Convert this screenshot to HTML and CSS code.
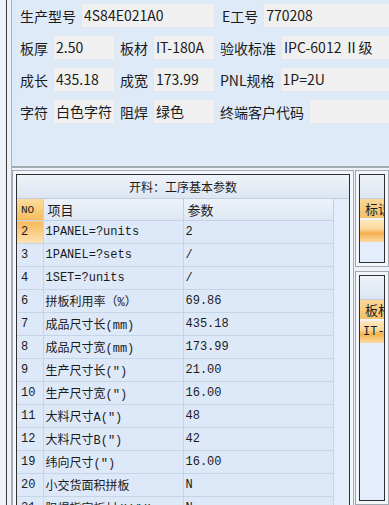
FILE: index.html
```html
<!DOCTYPE html>
<html lang="zh-CN">
<head>
  <meta charset="UTF-8" />
  <title>开料参数</title>
  <link rel="stylesheet" href="styles.css">
</head>
<body>
<div class="app">
  <div class="side"></div>
  <div class="main">

    <!-- 基本信息 -->
    <div class="top-panel">
      <div class="row">
        <span class="lbl">生产型号</span><span class="field w134">4S84E021A0</span>
        <span class="lbl gap2">E工号</span><span class="field grow">770208</span>
      </div>
      <div class="row">
        <span class="lbl">板厚</span><span class="field w62">2.50</span>
        <span class="lbl">板材</span><span class="field w62">IT-180A</span>
        <span class="lbl">验收标准</span><span class="field grow">IPC-6012 Ⅱ级</span>
      </div>
      <div class="row">
        <span class="lbl">成长</span><span class="field w62">435.18</span>
        <span class="lbl">成宽</span><span class="field w62">173.99</span>
        <span class="lbl">PNL规格</span><span class="field grow">1P=2U</span>
      </div>
      <div class="row">
        <span class="lbl">字符</span><span class="field w62">白色字符</span>
        <span class="lbl">阻焊</span><span class="field w62">绿色</span>
        <span class="lbl">终端客户代码</span><span class="field grow"></span>
      </div>
    </div>

    <div class="lower">
      <!-- 开料工序参数 -->
      <div class="group left-group">
        <div class="group-inner">
          <div class="group-title">开料：工序基本参数</div>
          <table class="grid">
            <colgroup><col class="c-no"><col class="c-item"><col class="c-val"></colgroup>
            <thead>
              <tr><th class="no">NO</th><th>项目</th><th>参数</th></tr>
            </thead>
            <tbody id="paramRows"></tbody>
          </table>
        </div>
      </div>

      <div class="right-col">
        <div class="group r1">
          <div class="group-inner">
            <div class="group-title"></div>
            <div class="r-head">标识</div>
            <div class="r-row"></div>
          </div>
        </div>
        <div class="group r2">
          <div class="group-inner">
            <div class="group-title"></div>
            <div class="r-head">板材</div>
            <div class="r-row mono">IT-180A</div>
          </div>
        </div>
      </div>
    </div>

  </div>
</div>

<script>
  const params = [
    ['2', '1PANEL=?units', '2'],
    ['3', '1PANEL=?sets', '/'],
    ['4', '1SET=?units', '/'],
    ['6', '拼板利用率（%）', '69.86'],
    ['7', '成品尺寸长(mm)', '435.18'],
    ['8', '成品尺寸宽(mm)', '173.99'],
    ['9', '生产尺寸长(")', '21.00'],
    ['10', '生产尺寸宽(")', '16.00'],
    ['11', '大料尺寸A(")', '48'],
    ['12', '大料尺寸B(")', '42'],
    ['19', '纬向尺寸(")', '16.00'],
    ['20', '小交货面积拼板', 'N'],
    ['21', '阻焊指定板材(W/W)', 'N']
  ];

  const body = document.getElementById('paramRows');
  params.forEach((p, i) => {
    const tr = document.createElement('tr');
    if (i === 0) tr.className = 'current';
    tr.innerHTML = `<td class="no">${p[0]}</td><td>${p[1]}</td><td>${p[2]}</td>`;
    body.appendChild(tr);
  });
</script>
</body>
</html>
```

FILE: styles.css
```css
body { margin: 0; background: #eef2f8; font-family: "Noto Sans CJK SC", sans-serif; color: #1b1b1b; }
.app { display: flex; width: 389px; height: 505px; overflow: hidden; }
.side { width: 12px; flex: none; background: linear-gradient(to right, #eef2f8 6px, #3a3a3a 6px, #3a3a3a 7px, #eef2f8 7px); border-right: 1px solid #a9b1bb; box-sizing: border-box; }
.main { flex: 1; display: flex; flex-direction: column; min-width: 0; }

/* top info panel */
.top-panel { height: 168px; flex: none; box-sizing: border-box; background: #dfeaf9; border-bottom: 2px solid #a3abb5; padding: 3px 0 0 8px; display: flex; flex-direction: column; gap: 7px; }
.row { display: flex; align-items: center; gap: 5px; height: 25px; font-size: 14px; }
.lbl { white-space: nowrap; }
.gap2 { margin-left: 2px; }
.field { height: 25px; box-sizing: border-box; background: #f0f0f0; border: 1px solid #e3e6ea; padding-left: 2px; line-height: 23px; white-space: nowrap; overflow: hidden; }
.w62 { width: 62px; }
.w134 { width: 134px; }
.grow { flex: 1; margin-right: -2px; }

/* lower group boxes */
.lower { flex: 1; display: flex; gap: 1px; padding-top: 2px; min-height: 0; }
.group { border: 1px solid #a2a9b3; padding: 3px; background: #f3f6fa; box-sizing: border-box; }
.group-inner { border: 1px solid #2f2f2f; height: 100%; box-sizing: border-box; background: #e3edfb; overflow: hidden; }
.group-title { height: 23px; line-height: 23px; text-align: center; font-size: 12px; background: linear-gradient(#eef3f9, #dce5f1); border-bottom: 1px solid #c3cfdf; }
.left-group { width: 342px; flex: none; height: 360px; }

.grid { border-collapse: collapse; table-layout: fixed; width: 316px; font-family: "Liberation Mono", "Noto Sans CJK SC", monospace; font-size: 12px; }
.c-no { width: 26px; }
.c-item { width: 140px; }
.c-val { width: 150px; }
.grid th { height: 21px; padding: 0 0 0 4px; text-align: left; font-weight: normal; font-family: "Noto Sans CJK SC", sans-serif; font-size: 13px; background: linear-gradient(#edf2f9, #dde7f3); border-right: 1px solid #c3d0e2; border-bottom: 1px solid #c3d0e2; }
.grid th.no { background: linear-gradient(#fbdc9c, #f6bd5d); font-family: "Liberation Mono", monospace; font-size: 11px; }
.grid td { height: 22px; padding: 0 0 0 2px; border-right: 1px solid #c6d4e8; border-bottom: 1px solid #c6d4e8; background: #dde9f9; white-space: nowrap; overflow: hidden; }
.grid td.no { padding-left: 4px; }
.grid tr.current td.no { background: linear-gradient(#f7b95b, #fce3b3); }

.right-col { flex: 1; display: flex; flex-direction: column; gap: 4px; min-width: 0; }
.r1 { height: 97px; flex: none; }
.r2 { flex: 1; }
.r-head { height: 19px; line-height: 19px; padding-left: 5px; font-size: 13px; background: linear-gradient(#fad796, #f5c06c); border-bottom: 2px solid #eef3fa; white-space: nowrap; }
.r-row { height: 22px; line-height: 22px; padding-left: 3px; background: linear-gradient(#fde7bd 0%, #fbd89a 40%, #f5b04e 60%, #fcdca3 100%); white-space: nowrap; }
.mono { font-family: "Liberation Mono", monospace; font-size: 12px; }
```
